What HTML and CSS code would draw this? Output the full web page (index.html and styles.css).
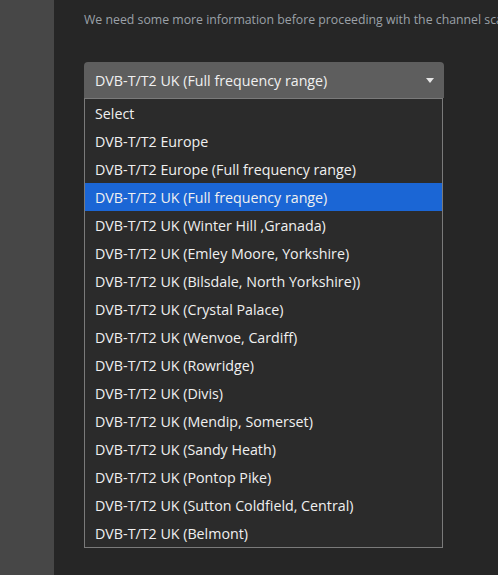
FILE: index.html
```html
<!DOCTYPE html>
<html>
<head>
<meta charset="utf-8">
<link rel="stylesheet" href="styles.css">
</head>
<body>
<div class="app">
  <aside class="sidebar"></aside>
  <main class="main">
    <p class="info">We need some more information before proceeding with the channel scan. Please select your region.</p>
    <div class="field">
      <div class="select">
        <span class="value">DVB-T/T2 UK (Full frequency range)</span>
        <svg class="arrow" width="8" height="5" viewBox="0 0 8 5"><path d="M0 0 H8 L4 5 Z" fill="#e6e6e6"/></svg>
      </div>
      <ul class="list">
        <li>Select</li>
        <li>DVB-T/T2 Europe</li>
        <li>DVB-T/T2 Europe (Full frequency range)</li>
        <li class="active">DVB-T/T2 UK (Full frequency range)</li>
        <li>DVB-T/T2 UK (Winter Hill ,Granada)</li>
        <li>DVB-T/T2 UK (Emley Moore, Yorkshire)</li>
        <li>DVB-T/T2 UK (Bilsdale, North Yorkshire))</li>
        <li>DVB-T/T2 UK (Crystal Palace)</li>
        <li>DVB-T/T2 UK (Wenvoe, Cardiff)</li>
        <li>DVB-T/T2 UK (Rowridge)</li>
        <li>DVB-T/T2 UK (Divis)</li>
        <li>DVB-T/T2 UK (Mendip, Somerset)</li>
        <li>DVB-T/T2 UK (Sandy Heath)</li>
        <li>DVB-T/T2 UK (Pontop Pike)</li>
        <li>DVB-T/T2 UK (Sutton Coldfield, Central)</li>
        <li>DVB-T/T2 UK (Belmont)</li>
      </ul>
    </div>
  </main>
</div>
</body>
</html>
```
FILE: styles.css
```css
html, body {
  margin: 0;
  padding: 0;
  height: 100%;
  background: #262626;
  overflow: hidden;
}
.app {
  display: flex;
  height: 100%;
  font-family: "Open Sans", "Noto Sans", sans-serif;
}
.sidebar {
  width: 54px;
  flex: none;
  background: #474747;
}
.main {
  flex: 1;
  min-width: 0;
  padding: 0 0 0 30px;
  overflow: hidden;
}
.info {
  margin: 11px 0 0;
  font-size: 12.3px;
  line-height: 17px;
  color: #9ba1a8;
  white-space: nowrap;
}
.field {
  width: 360px;
  margin-top: 34px;
}
.select {
  height: 36px;
  background: #5e5e5e;
  border-radius: 4px 4px 0 0;
  display: flex;
  align-items: center;
  justify-content: space-between;
  padding: 0 10px 0 11px;
  box-sizing: border-box;
}
.value {
  font-size: 14.25px;
  color: #f0f0f0;
}
.arrow {
  display: block;
  margin-top: 1px;
}
.list {
  list-style: none;
  margin: 0;
  padding: 0;
  border: 1px solid #7a7a7a;
  background: #2b2b2b;
  width: 359px;
  box-sizing: border-box;
}
.list li {
  height: 28px;
  line-height: 30px;
  overflow: hidden;
  padding-left: 10px;
  font-size: 14.25px;
  color: #f0f0f0;
}
.list li.active {
  background: #1b66d5;
}
```
